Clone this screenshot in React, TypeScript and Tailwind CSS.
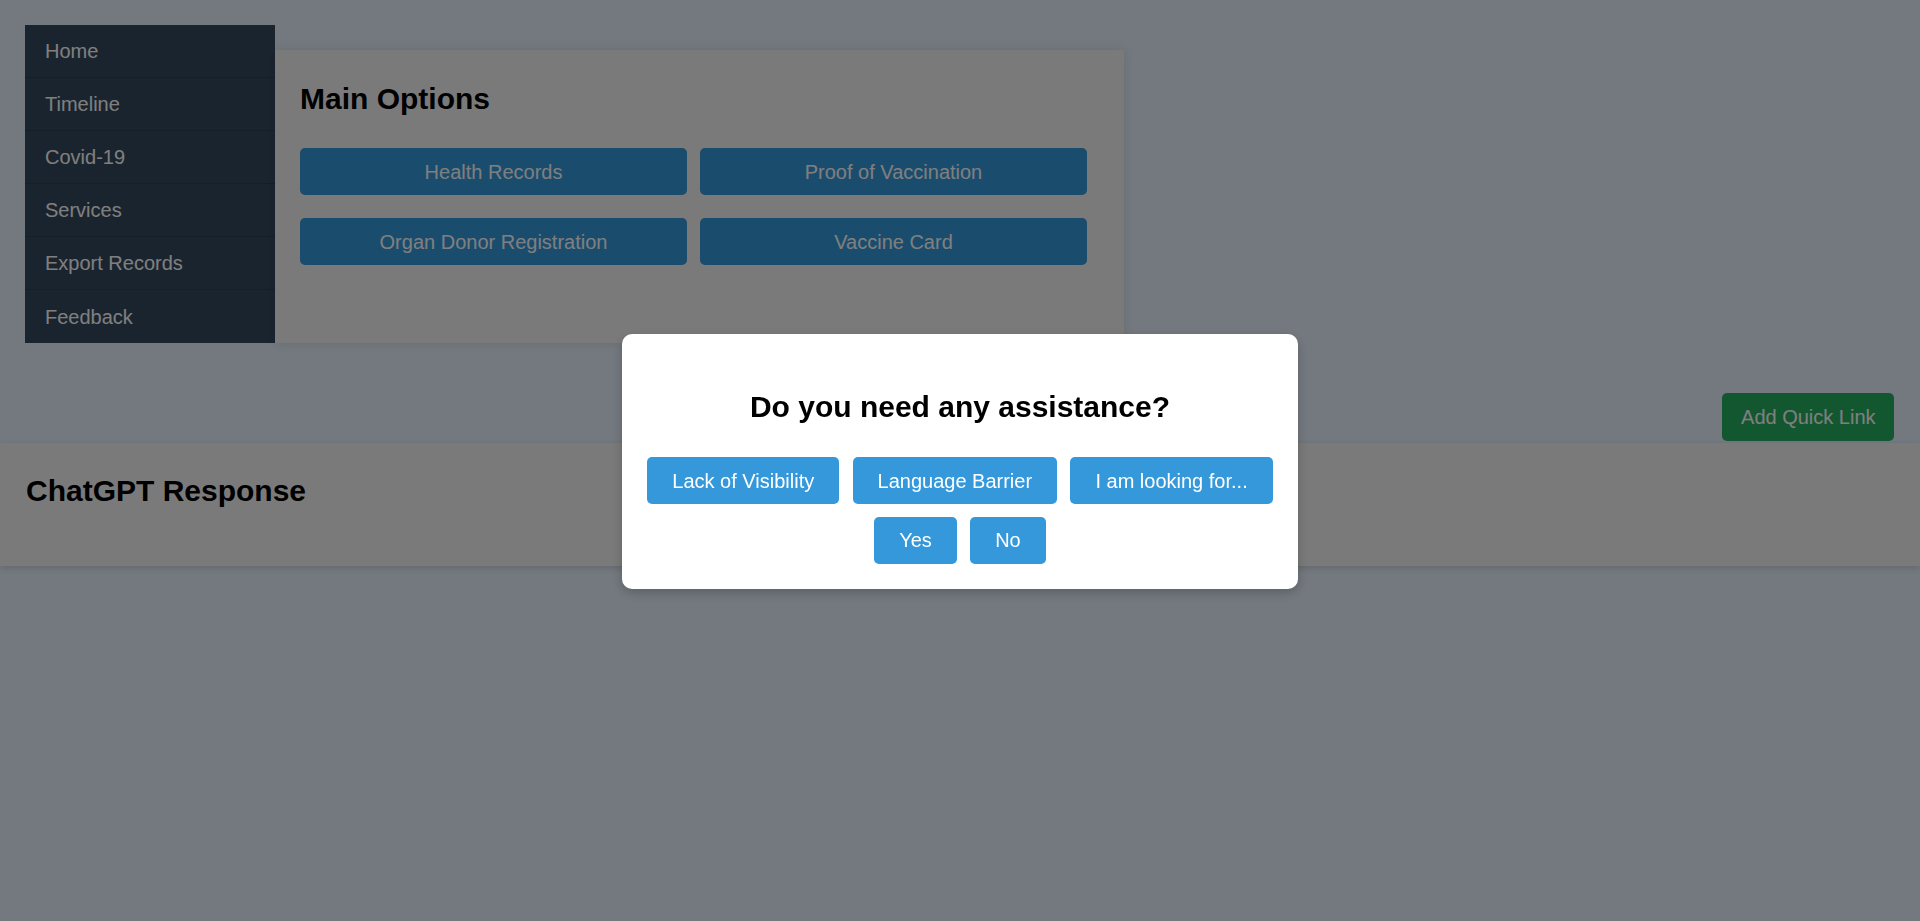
import React from "react";

const navItems = ["Home", "Timeline", "Covid-19", "Services", "Export Records", "Feedback"];
const mainOptions = ["Health Records", "Proof of Vaccination", "Organ Donor Registration", "Vaccine Card"];

export default function App() {
  return (
    <div className="relative h-[921px] overflow-hidden bg-[#e6f2fe] font-['Liberation_Sans',Arial,sans-serif] text-black">
      <div className="flex pt-[25px] pl-[25px]">
        <nav className="w-[250px] bg-[#34495e]">
          {navItems.map((item, i) => (
            <div
              key={item}
              className={`flex h-[53px] items-center px-[20px] text-[20px] text-white ${
                i < navItems.length - 1 ? "border-b border-[#2c3e50]" : ""
              }`}
            >
              {item}
            </div>
          ))}
        </nav>
        <section className="mt-[25px] w-[849px] bg-[#f4f4f4] px-[25px] shadow-[0_0_10px_rgba(0,0,0,0.1)]">
          <h2 className="mt-[31.5px] mb-[32px] text-[30px] font-bold leading-[34.5px]">Main Options</h2>
          <div className="grid grid-cols-[387px_387px] gap-x-[13px] gap-y-[22.6px]">
            {mainOptions.map((o) => (
              <button
                key={o}
                className="h-[47.4px] rounded-[5px] bg-[#3498db] text-[20px] text-white"
              >
                {o}
              </button>
            ))}
          </div>
        </section>
      </div>

      <div className="mt-[50.3px] flex justify-end pr-[25.7px]">
        <button className="h-[47.4px] rounded-[5px] bg-[#27ae60] px-[18.75px] text-[20px] text-white">
          Add Quick Link
        </button>
      </div>

      <section className="mt-[2.3px] h-[123px] bg-[#f4f4f4] pl-[26px] pt-[31.5px] shadow-[0_2px_6px_rgba(0,0,0,0.15)]">
        <h2 className="text-[30px] font-bold leading-[34.5px]">ChatGPT Response</h2>
      </section>

      <div className="fixed inset-0 flex items-center justify-center bg-black/50 pt-[2px]">
        <div className="rounded-[10px] bg-white p-[25px] text-center shadow-[0_4px_12px_rgba(0,0,0,0.2)]">
          <h2 className="mt-[31px] mb-[32.5px] text-[30px] font-bold leading-[34.5px]">
            Do you need any assistance?
          </h2>
          <div className="flex flex-col items-center gap-[12.7px]">
            <div className="flex gap-[13.3px]">
              {["Lack of Visibility", "Language Barrier", "I am looking for..."].map((t) => (
                <button
                  key={t}
                  className="h-[47.3px] rounded-[5px] bg-[#3498db] px-[25px] text-[20px] text-white"
                >
                  {t}
                </button>
              ))}
            </div>
            <div className="flex gap-[13.3px]">
              {["Yes", "No"].map((t) => (
                <button
                  key={t}
                  className="h-[47.3px] rounded-[5px] bg-[#3498db] px-[25px] text-[20px] text-white"
                >
                  {t}
                </button>
              ))}
            </div>
          </div>
        </div>
      </div>
    </div>
  );
}
